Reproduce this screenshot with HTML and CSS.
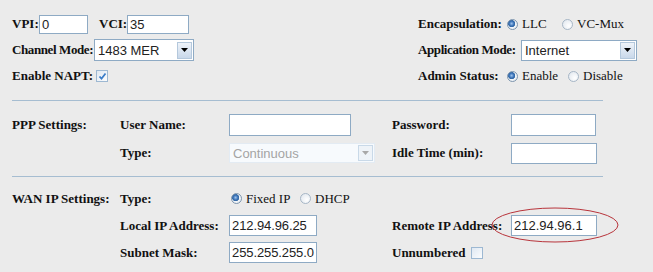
FILE: index.html
```html
<!DOCTYPE html>
<html lang="en">

<head>
    <meta charset="UTF-8" />
    <title>WAN Configuration</title>
    <link rel="stylesheet" href="styles.css">
</head>

<body>
    <div class="top">
        <div class="col left">
            <div class="row">
                <label class="lbl w-vpi">VPI:</label>
                <input class="field w49" type="text" value="0" />
                <label class="lbl w-vci">VCI:</label>
                <input class="field w62" type="text" value="35" />
            </div>
            <div class="row">
                <label class="lbl w-chan tight">Channel Mode:</label>
                <div class="select w100">
                    <span class="sel-text">1483 MER</span>
                    <span class="arrow"><svg width="7" height="4" viewBox="0 0 7 4"><path d="M0 0h7L3.5 4z" /></svg></span>
                </div>
            </div>
            <div class="row">
                <label class="lbl w-napt">Enable NAPT:</label>
                <span class="check checked">
                    <svg width="9" height="9" viewBox="0 0 9 9"><path d="M1.5 4.5l2 2.2 4-5.2" /></svg>
                </span>
            </div>
        </div>
        <div class="col right">
            <div class="row">
                <label class="lbl w-right">Encapsulation:</label>
                <span class="opt w55"><span class="radio on"></span>LLC</span>
                <span class="opt"><span class="radio"></span>VC-Mux</span>
            </div>
            <div class="row">
                <label class="lbl w-app tight">Application Mode:</label>
                <div class="select w116">
                    <span class="sel-text">Internet</span>
                    <span class="arrow"><svg width="7" height="4" viewBox="0 0 7 4"><path d="M0 0h7L3.5 4z" /></svg></span>
                </div>
            </div>
            <div class="row">
                <label class="lbl w-right">Admin Status:</label>
                <span class="opt w61"><span class="radio on"></span>Enable</span>
                <span class="opt"><span class="radio"></span>Disable</span>
            </div>
        </div>
    </div>

    <div class="rule r1"></div>

    <div class="grid ppp">
        <div class="lbl">PPP Settings:</div>
        <div class="lbl">User Name:</div>
        <div><input class="field w122 h22" type="text" value="" /></div>
        <div class="lbl">Password:</div>
        <div><input class="field w85 h22" type="password" value="" /></div>

        <div></div>
        <div class="lbl">Type:</div>
        <div>
            <div class="select disabled w146">
                <span class="sel-text">Continuous</span>
                <span class="arrow"><svg width="7" height="4" viewBox="0 0 7 4"><path d="M0 0h7L3.5 4z" /></svg></span>
            </div>
        </div>
        <div class="lbl">Idle Time (min):</div>
        <div><input class="field w86" type="text" value="" /></div>
    </div>

    <div class="rule r2"></div>

    <div class="grid wan">
        <div class="lbl">WAN IP Settings:</div>
        <div class="lbl">Type:</div>
        <div class="span3 type-opts">
            <span class="opt w69"><span class="radio on"></span>Fixed IP</span>
            <span class="opt"><span class="radio"></span>DHCP</span>
        </div>

        <div></div>
        <div class="lbl">Local IP Address:</div>
        <div><input class="field w88" type="text" value="212.94.96.25" /></div>
        <div class="lbl">Remote IP Address:</div>
        <div class="marked">
            <input class="field w86" type="text" value="212.94.96.1" />
            <svg class="ring" width="130" height="38" viewBox="0 0 130 38">
                <ellipse cx="65" cy="19" rx="63" ry="17" />
            </svg>
        </div>

        <div></div>
        <div class="lbl">Subnet Mask:</div>
        <div><input class="field w88" type="text" value="255.255.255.0" /></div>
        <div class="span2 unnum">
            <span class="lbl">Unnumbered</span>
            <span class="check"></span>
        </div>
    </div>
</body>

</html>
```

FILE: styles.css
```css
body {
    margin: 0;
    background: #ebebeb;
    font-family: 'Liberation Serif', 'Times New Roman', serif;
    font-size: 13px;
    color: #111;
}

.lbl {
    font-weight: bold;
    white-space: nowrap;
}

.tight {
    letter-spacing: -0.4px;
}

/* top block */
.top {
    display: flex;
    padding: 11px 0 0 12px;
}

.col.left {
    width: 406px;
}

.row {
    display: flex;
    align-items: center;
    height: 26px;
}

.w-vpi {
    width: 27px;
}

.w-vci {
    width: 28px;
    margin-left: 11px;
}

.w-chan {
    width: 82px;
}

.w-napt {
    width: 84px;
}

.w-right {
    width: 89px;
}

.w-app {
    width: 103px;
}

.opt {
    display: flex;
    align-items: center;
    white-space: nowrap;
}

.w55 {
    width: 55px;
}

.w61 {
    width: 61px;
}

.w69 {
    width: 69px;
}

/* form controls */
.field {
    box-sizing: border-box;
    height: 21px;
    margin: 0;
    padding: 0 0 0 2px;
    border: 1px solid #8eaac4;
    background: #fff;
    font-family: 'Liberation Sans', Arial, sans-serif;
    font-size: 13px;
    color: #222;
    outline: none;
}

.w49 { width: 49px; height: 19px; }
.w62 { width: 62px; height: 19px; }
.w85 { width: 85px; }
.w86 { width: 86px; }
.w88 { width: 88px; letter-spacing: -0.1px; }
.w122 { width: 122px; }
.h22 { height: 22px; }

.select {
    box-sizing: border-box;
    display: flex;
    align-items: center;
    justify-content: space-between;
    height: 22px;
    padding: 0 1px 0 3px;
    border: 1px solid #8eaac4;
    background: #fff;
    font-family: 'Liberation Sans', Arial, sans-serif;
    font-size: 13px;
    color: #222;
}

.w100 { width: 100px; }
.w116 { width: 116px; height: 21px; }
.w146 { width: 146px; height: 20px; }

.arrow {
    box-sizing: border-box;
    display: flex;
    align-items: center;
    justify-content: center;
    width: 15px;
    height: 17px;
    border: 1px solid #b4c8dc;
    background: linear-gradient(#eef3f9, #c9d8ea);
}

.arrow svg path {
    fill: #000;
}

.select.disabled {
    border-color: #e3ebf3;
    background: #f7fafd;
    color: #a4a4a4;
}

.select.disabled .arrow {
    height: 16px;
    border-color: #c9d9e8;
    background: #eef3f8;
}

.select.disabled .arrow svg path {
    fill: #a8a8a8;
}

.check {
    box-sizing: border-box;
    display: inline-flex;
    align-items: center;
    justify-content: center;
    width: 12px;
    height: 12px;
    border: 1px solid #9db8d2;
    background: linear-gradient(135deg, #dfe8f2, #fbfcfd);
}

.check svg path {
    fill: none;
    stroke: #3a7cc8;
    stroke-width: 1.8;
}

.radio {
    box-sizing: border-box;
    display: inline-block;
    width: 11px;
    height: 11px;
    margin-right: 4px;
    border: 1px solid #a6b6c6;
    border-radius: 50%;
    background: radial-gradient(circle at 65% 65%, #ffffff, #dde4ec);
}

.radio.on {
    border-color: #7d95ae;
    background: radial-gradient(circle at 40% 40%, #9fc4ec 0, #2e68b0 2.6px, #3f6fa4 3.4px, #f2f5f8 3.8px, #e2e8ee 100%);
}

/* sections */
.rule {
    width: 591px;
    height: 1px;
    margin-left: 12px;
    background: #a6bdd1;
}

.r1 {
    margin-top: 11px;
}

.r2 {
    margin-top: 9px;
}

.grid {
    display: grid;
    grid-template-columns: 108px 109px 163px 119px 120px;
    align-items: center;
    padding-left: 12px;
}

.ppp {
    padding-top: 10px;
    grid-auto-rows: 28px;
}

.wan {
    padding-top: 8px;
    grid-auto-rows: 27px;
}

.span3 {
    grid-column: span 3;
}

.span2 {
    grid-column: span 2;
}

.type-opts {
    display: flex;
    padding-left: 2px;
}

.unnum {
    display: flex;
    align-items: center;
}

.unnum .check {
    margin-left: 6px;
}

.marked {
    position: relative;
    height: 21px;
}

.ring {
    position: absolute;
    left: -21px;
    top: -9px;
}

.ring ellipse {
    fill: none;
    stroke: #b8343b;
    stroke-width: 1;
}
```
